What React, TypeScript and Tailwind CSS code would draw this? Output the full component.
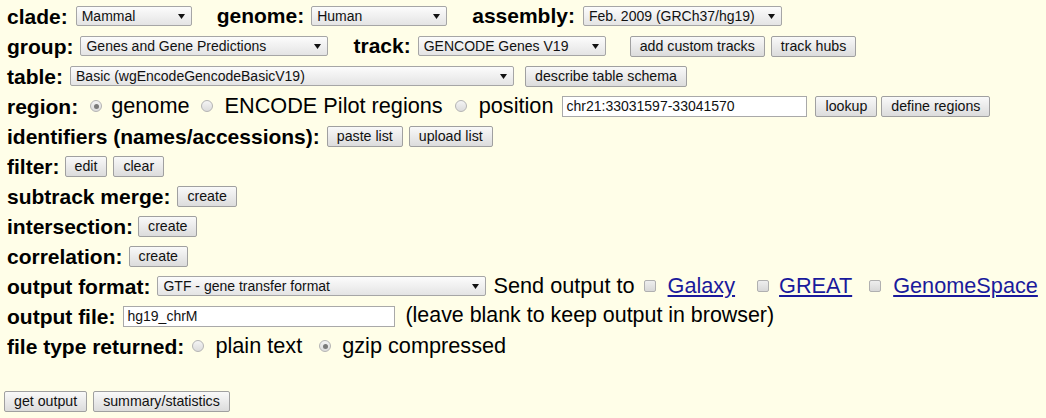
import React from 'react';

const Label: React.FC<{ children: React.ReactNode }> = ({ children }) => (
  <span className="font-bold text-[21px] leading-none">{children}</span>
);

const Select: React.FC<{ text: string; w: string; cls?: string }> = ({ text, w, cls = '' }) => (
  <div
    className={`inline-flex items-center justify-between h-[20px] border border-[#a6a6a6] rounded-[2px] bg-linear-to-b from-[#fcfcfc] to-[#e4e4e4] pl-[5px] pr-[6px] text-[14px] leading-none text-[#111] ${w} ${cls}`}
  >
    <span className="whitespace-nowrap">{text}</span>
    <svg width="7" height="5" viewBox="0 0 7 5" className="shrink-0">
      <path d="M0 0h7L3.5 5z" fill="#111" />
    </svg>
  </div>
);

const Btn: React.FC<{ children: React.ReactNode; cls?: string }> = ({ children, cls = '' }) => (
  <button
    className={`h-[21px] px-[9px] border border-[#a0a0a0] rounded-[2px] bg-linear-to-b from-[#f9f9f9] to-[#dcdcdc] text-[14.2px] leading-none text-[#111] whitespace-nowrap ${cls}`}
  >
    {children}
  </button>
);

const Radio: React.FC<{ checked?: boolean; cls?: string }> = ({ checked, cls = '' }) => (
  <span
    className={`inline-flex items-center justify-center w-[12px] h-[12px] rounded-full border border-[#b4b4b4] bg-linear-to-b from-[#f4f4f4] to-[#dcdcdc] shrink-0 ${cls}`}
  >
    {checked && <span className="w-[5px] h-[5px] rounded-full bg-[#7a7a7a]" />}
  </span>
);

const Check: React.FC<{ cls?: string }> = ({ cls = '' }) => (
  <span
    className={`inline-block w-[12px] h-[12px] rounded-[2px] border border-[#b0b0b0] bg-linear-to-b from-[#eeeeee] to-[#d8d8d8] shrink-0 ${cls}`}
  />
);

const Input: React.FC<{ value: string; w: string; cls?: string }> = ({ value, w, cls = '' }) => (
  <div
    className={`inline-flex items-center h-[21px] border border-[#a9a9a9] bg-white px-[3px] text-[14px] leading-none text-[#111] ${w} ${cls}`}
  >
    {value}
  </div>
);

const Row: React.FC<{ children: React.ReactNode }> = ({ children }) => (
  <div className="flex items-center h-[30px] pl-[7px] whitespace-nowrap">{children}</div>
);

const Link: React.FC<{ children: React.ReactNode; cls?: string }> = ({ children, cls = '' }) => (
  <a href="#" className={`text-[#1a1a9c] underline underline-offset-2 ${cls}`}>
    {children}
  </a>
);

export default function App() {
  return (
    <div
      className="w-[1046px] h-[418px] bg-[#fffee8] text-black text-[21.7px] leading-none pt-[1px] overflow-hidden"
      style={{ fontFamily: '"Liberation Sans", Arial, sans-serif' }}
    >
      <Row>
        <Label>clade:</Label>
        <Select text="Mammal" w="w-[116px]" cls="ml-[8px]" />
        <span className="ml-[25px]"><Label>genome:</Label></span>
        <Select text="Human" w="w-[136px]" cls="ml-[7px]" />
        <span className="ml-[25px]"><Label>assembly:</Label></span>
        <Select text="Feb. 2009 (GRCh37/hg19)" w="w-[199px]" cls="ml-[8px]" />
      </Row>
      <Row>
        <Label>group:</Label>
        <Select text="Genes and Gene Predictions" w="w-[248px]" cls="ml-[7px]" />
        <span className="ml-[25px]"><Label>track:</Label></span>
        <Select text="GENCODE Genes V19" w="w-[188px]" cls="ml-[7px]" />
        <Btn cls="ml-[24px]">add custom tracks</Btn>
        <Btn cls="ml-[6px]">track hubs</Btn>
      </Row>
      <Row>
        <Label>table:</Label>
        <Select text="Basic (wgEncodeGencodeBasicV19)" w="w-[444px]" cls="ml-[7px]" />
        <Btn cls="ml-[11px]">describe table schema</Btn>
      </Row>
      <Row>
        <Label>region:</Label>
        <Radio checked cls="ml-[12px] mr-[9px]" />
        <span>genome</span>
        <Radio cls="ml-[11px] mr-[12px]" />
        <span>ENCODE Pilot regions</span>
        <Radio cls="ml-[12px] mr-[12px]" />
        <span>position</span>
        <Input value="chr21:33031597-33041570" w="w-[245px]" cls="ml-[9px]" />
        <Btn cls="ml-[8px]">lookup</Btn>
        <Btn cls="ml-[4px]">define regions</Btn>
      </Row>
      <Row>
        <Label>identifiers (names/accessions):</Label>
        <Btn cls="ml-[7px]">paste list</Btn>
        <Btn cls="ml-[6px]">upload list</Btn>
      </Row>
      <Row>
        <Label>filter:</Label>
        <Btn cls="ml-[5px]">edit</Btn>
        <Btn cls="ml-[6px]">clear</Btn>
      </Row>
      <Row>
        <Label>subtrack merge:</Label>
        <Btn cls="ml-[7px]">create</Btn>
      </Row>
      <Row>
        <Label>intersection:</Label>
        <Btn cls="ml-[5px]">create</Btn>
      </Row>
      <Row>
        <Label>correlation:</Label>
        <Btn cls="ml-[6px]">create</Btn>
      </Row>
      <Row>
        <Label>output format:</Label>
        <Select text="GTF - gene transfer format" w="w-[329px]" cls="ml-[7px]" />
        <span className="ml-[7px]">Send output to</span>
        <Check cls="ml-[9px]" />
        <Link cls="ml-[12px]">Galaxy</Link>
        <Check cls="ml-[22px]" />
        <Link cls="ml-[10px]">GREAT</Link>
        <Check cls="ml-[17px]" />
        <Link cls="ml-[12px]">GenomeSpace</Link>
      </Row>
      <Row>
        <Label>output file:</Label>
        <Input value="hg19_chrM" w="w-[272px]" cls="ml-[8px]" />
        <span className="ml-[10px] text-[21.4px]">(leave blank to keep output in browser)</span>
      </Row>
      <Row>
        <Label>file type returned:</Label>
        <Radio cls="ml-[8px] mr-[11px]" />
        <span>plain text</span>
        <Radio checked cls="ml-[17px] mr-[11px]" />
        <span>gzip compressed</span>
      </Row>
      <div className="flex items-center h-[30px] mt-[25px] pl-[4px]">
        <Btn>get output</Btn>
        <Btn cls="ml-[6px]">summary/statistics</Btn>
      </div>
    </div>
  );
}
